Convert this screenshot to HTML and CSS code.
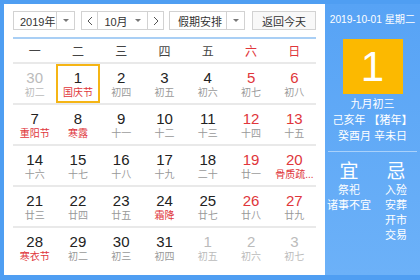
FILE: index.html
```html
<!DOCTYPE html>
<html lang="zh">
<head>
<meta charset="utf-8">
<title>万年历</title>
<link rel="stylesheet" href="styles.css">
</head>
<body>
<div class="cal">
  <div class="main">
    <div class="toolbar">
      <div class="sel year"><span class="val">2019年</span><span class="arr"><i class="tri"></i></span></div>
      <div class="sel month">
        <span class="nav"><svg width="6" height="10" viewBox="0 0 6 10"><polyline points="5,1 1,5 5,9" fill="none" stroke="#555" stroke-width="1"/></svg></span>
        <span class="val mid">10月<i class="tri"></i></span>
        <span class="nav"><svg width="6" height="10" viewBox="0 0 6 10"><polyline points="1,1 5,5 1,9" fill="none" stroke="#555" stroke-width="1"/></svg></span>
      </div>
      <div class="sel holiday"><span class="val">假期安排</span><span class="arr"><i class="tri"></i></span></div>
      <button class="today">返回今天</button>
    </div>
    <div class="week">
      <span>一</span><span>二</span><span>三</span><span>四</span><span>五</span><span class="red">六</span><span class="red">日</span>
    </div>
    <div class="days">
      <div class="row">
        <div class="cell other"><b>30</b><small>初二</small></div>
        <div class="cell sel-day"><b>1</b><small class="red">国庆节</small></div>
        <div class="cell"><b>2</b><small>初四</small></div>
        <div class="cell"><b>3</b><small>初五</small></div>
        <div class="cell"><b>4</b><small>初六</small></div>
        <div class="cell"><b class="red">5</b><small>初七</small></div>
        <div class="cell"><b class="red">6</b><small>初八</small></div>
      </div>
      <div class="row">
        <div class="cell"><b>7</b><small class="red">重阳节</small></div>
        <div class="cell"><b>8</b><small class="red">寒露</small></div>
        <div class="cell"><b>9</b><small>十一</small></div>
        <div class="cell"><b>10</b><small>十二</small></div>
        <div class="cell"><b>11</b><small>十三</small></div>
        <div class="cell"><b class="red">12</b><small>十四</small></div>
        <div class="cell"><b class="red">13</b><small>十五</small></div>
      </div>
      <div class="row">
        <div class="cell"><b>14</b><small>十六</small></div>
        <div class="cell"><b>15</b><small>十七</small></div>
        <div class="cell"><b>16</b><small>十八</small></div>
        <div class="cell"><b>17</b><small>十九</small></div>
        <div class="cell"><b>18</b><small>二十</small></div>
        <div class="cell"><b class="red">19</b><small>廿一</small></div>
        <div class="cell"><b class="red">20</b><small class="red">骨质疏...</small></div>
      </div>
      <div class="row">
        <div class="cell"><b>21</b><small>廿三</small></div>
        <div class="cell"><b>22</b><small>廿四</small></div>
        <div class="cell"><b>23</b><small>廿五</small></div>
        <div class="cell"><b>24</b><small class="red">霜降</small></div>
        <div class="cell"><b>25</b><small>廿七</small></div>
        <div class="cell"><b class="red">26</b><small>廿八</small></div>
        <div class="cell"><b class="red">27</b><small>廿九</small></div>
      </div>
      <div class="row">
        <div class="cell"><b>28</b><small class="red">寒衣节</small></div>
        <div class="cell"><b>29</b><small>初二</small></div>
        <div class="cell"><b>30</b><small>初三</small></div>
        <div class="cell"><b>31</b><small>初四</small></div>
        <div class="cell other"><b>1</b><small>初五</small></div>
        <div class="cell other"><b>2</b><small>初六</small></div>
        <div class="cell other"><b>3</b><small>初七</small></div>
      </div>
    </div>
  </div>
  <div class="side">
    <div class="date">2019-10-01 星期二</div>
    <div class="big">1</div>
    <div class="lunar">
      <div>九月初三</div>
      <div>己亥年 【猪年】</div>
      <div>癸酉月 辛未日</div>
    </div>
    <div class="divider"></div>
    <div class="yiji">
      <div class="col">
        <div class="head">宜</div>
        <div>祭祀</div>
        <div>诸事不宜</div>
      </div>
      <div class="col">
        <div class="head">忌</div>
        <div>入殓</div>
        <div>安葬</div>
        <div>开市</div>
        <div>交易</div>
      </div>
    </div>
  </div>
</div>
</body>
</html>
```

FILE: styles.css
```css
* { box-sizing: border-box; }
html, body { margin: 0; padding: 0; }
body {
  font-family: "Liberation Sans", "Noto Sans CJK SC", sans-serif;
  background: #fff;
}
.cal {
  width: 420px;
  height: 280px;
  display: flex;
  background: #4f9ef2;
  padding: 4px 0 5px 4px;
}
.main {
  width: 321px;
  height: 271px;
  background: #fff;
  padding: 7px 9px 0 9px;
}
.toolbar {
  display: flex;
  height: 19px;
  gap: 6px;
  font-size: 11px;
  color: #333;
}
.sel {
  display: flex;
  border: 1px solid #d2d2d2;
  background: #fff;
}
.sel .val {
  display: flex;
  align-items: center;
  padding-left: 6px;
  flex: 1;
}
.sel .arr {
  width: 18px;
  border-left: 1px solid #d2d2d2;
  display: flex;
  align-items: center;
  justify-content: center;
}
.tri {
  display: inline-block;
  width: 0;
  height: 0;
  border-left: 3px solid transparent;
  border-right: 3px solid transparent;
  border-top: 3px solid #777;
}
.year { width: 62px; }
.month { width: 83px; margin-right: -1px; }
.month .nav {
  width: 16px;
  display: flex;
  align-items: center;
  justify-content: center;
}
.month .nav:first-child { border-right: 1px solid #d2d2d2; }
.month .nav:last-child { border-left: 1px solid #d2d2d2; }
.month .mid {
  justify-content: center;
  padding-left: 0;
  gap: 7px;
}
.holiday { width: 76px; }
.holiday .val { padding-left: 8px; }
.today {
  width: 64px;
  margin-left: 1px;
  border: 1px solid #d2d2d2;
  background: #f8f8f8;
  font: inherit;
  color: #333;
  padding: 0;
}
.week {
  margin-top: 7px;
  border-top: 2px solid #a9cff5;
  border-bottom: 2px solid #e9e9e9;
  height: 27px;
  display: grid;
  grid-template-columns: repeat(7, 1fr);
  align-items: center;
  text-align: center;
  font-size: 12px;
  color: #444;
}
.red { color: #e0363b !important; }
.days .row {
  display: grid;
  grid-template-columns: repeat(7, 1fr);
  height: 41px;
  border-bottom: 2px solid #e9e9e9;
}
.days .row:last-child { border-bottom: none; height: 39px; }
.cell {
  text-align: center;
  padding-top: 5px;
  white-space: nowrap;
}
.cell b {
  display: block;
  font-weight: normal;
  font-size: 15px;
  line-height: 17px;
  color: #222;
}
.cell small {
  display: block;
  font-size: 10px;
  line-height: 13px;
  color: #999;
}
.cell.other b, .cell.other small { color: #bbb; }
.sel-day { box-shadow: inset 0 0 0 2px #f5b515; }
.side {
  width: 95px;
  height: 271px;
  background: linear-gradient(#57a3f5, #6cb1f8);
  color: #fff;
  display: flex;
  flex-direction: column;
  align-items: center;
  padding-top: 9px;
}
.date {
  font-size: 10.2px;
  line-height: 14px;
  white-space: nowrap;
}
.big {
  margin-top: 12px;
  width: 60px;
  height: 55px;
  background: #fcb900;
  font-size: 42px;
  line-height: 55px;
  text-align: center;
}
.lunar {
  margin-top: 2px;
  font-size: 11px;
  line-height: 16px;
  text-align: center;
  white-space: nowrap;
}
.divider {
  margin-top: 7px;
  width: 89px;
  height: 1px;
  background: rgba(255, 255, 255, 0.45);
}
.yiji {
  display: flex;
  gap: 3px;
  margin-top: 9px;
}
.col {
  width: 44px;
  text-align: center;
  font-size: 11px;
  line-height: 15px;
  white-space: nowrap;
}
.col .head {
  font-size: 19px;
  line-height: 22px;
}
```
